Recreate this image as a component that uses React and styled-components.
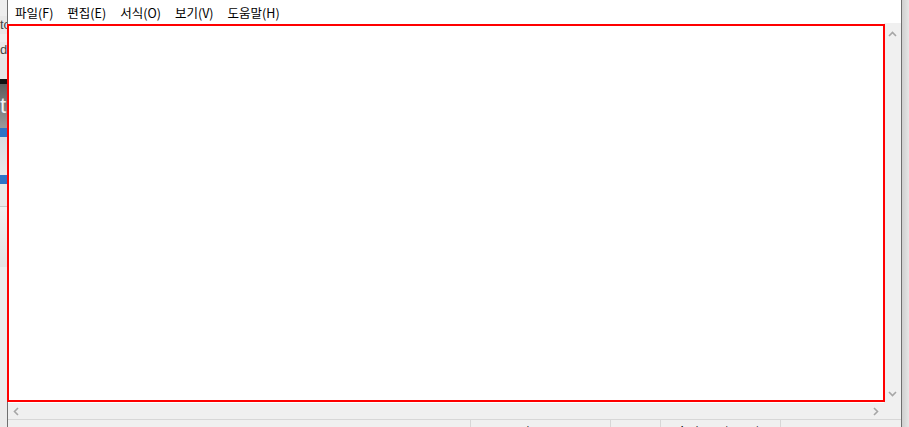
import React from 'react';
import styled, { createGlobalStyle } from 'styled-components';

const GlobalStyle = createGlobalStyle`
  html, body {
    margin: 0;
    padding: 0;
    overflow: hidden;
    background: #e9e9e9;
  }
  body {
    font-family: "Noto Sans CJK KR", "Noto Sans", sans-serif;
  }
`

const Screen = styled.div`
  display: flex;
  width: 909px;
  height: 427px;
  overflow: hidden;
`

// sliver of the window behind notepad
const Behind = styled.div`
  width: 7px;
  flex: none;
  display: flex;
  flex-direction: column;
  overflow: hidden;
  background: #ececec;
`

const Band = styled.div`
  height: ${p => p.h}px;
  flex: none;
  background: ${p => p.bg};
  color: ${p => p.fg || '#555'};
  font-family: "Liberation Sans", sans-serif;
  font-size: ${p => p.size || 13}px;
  line-height: ${p => p.h}px;
  white-space: nowrap;
  overflow: hidden;
`

const Window = styled.div`
  width: 893px;
  flex: none;
  display: flex;
  flex-direction: column;
  background: #f0f0f0;
  border-left: 1px solid #6f6f6f;
  border-right: 1px solid #6f6f6f;
`

const Shadow = styled.div`
  flex: 1;
  background: linear-gradient(to right, #cfcfcf, #e6e6e6);
`

const MenuBar = styled.div`
  height: 23px;
  flex: none;
  display: flex;
  align-items: flex-start;
  background: #fff;
`

const MenuItem = styled.div`
  padding: 4px 7px 0;
  font-size: 12.5px;
  line-height: 17px;
  color: #000;
  white-space: nowrap;
`

const Middle = styled.div`
  display: flex;
  height: 380px;
  flex: none;
`

const Editor = styled.div`
  position: relative;
  width: 876px;
  background: #fff;
`

const Highlight = styled.div`
  position: absolute;
  top: 1px;
  left: -1px;
  right: -1px;
  bottom: 1px;
  border: 2px solid #ff0000;
  z-index: 2;
  pointer-events: none;
`

const VScroll = styled.div`
  width: 17px;
  display: flex;
  flex-direction: column;
  justify-content: space-between;
  align-items: center;
  padding: 8px 0 6px;
  box-sizing: border-box;
  background: #f0f0f0;
`

const HRow = styled.div`
  display: flex;
  height: 16px;
  flex: none;
`

const HScroll = styled.div`
  width: 876px;
  display: flex;
  justify-content: space-between;
  align-items: center;
  padding: 0 5px 0 5px;
  box-sizing: border-box;
`

const Corner = styled.div`
  width: 17px;
`

const StatusBar = styled.div`
  flex: 1;
  display: flex;
  border-top: 1px solid #d7d7d7;
`

const Cell = styled.div`
  width: ${p => p.w}px;
  flex: none;
  box-sizing: border-box;
  border-right: ${p => (p.last ? 'none' : '1px solid #d7d7d7')};
  padding: 2px 0 0 ${p => p.pad || 10}px;
  font-size: 12px;
  line-height: 17px;
  color: #000;
  white-space: nowrap;
`

const Chevron = ({ dir }) => {
  const pts = {
    up: '1,5 4.5,1.5 8,5',
    down: '1,1 4.5,4.5 8,1',
    left: '5,1 1.5,4.5 5,8',
    right: '1,1 4.5,4.5 1,8',
  }[dir]
  const horiz = dir === 'up' || dir === 'down'
  return (
    <svg width={horiz ? 9 : 6} height={horiz ? 6 : 9} viewBox={horiz ? '0 0 9 6' : '0 0 6 9'}>
      <polyline points={pts} fill="none" stroke="#a6a6a6" strokeWidth="1.6" />
    </svg>
  )
}

const menus = ['파일(F)', '편집(E)', '서식(O)', '보기(V)', '도움말(H)']

export default function App() {
  return (
    <Screen>
      <GlobalStyle />
      <Behind>
        <Band h={16} bg="#eeeeee" />
        <Band h={18} bg="#e8e8e8" fg="#444">to</Band>
        <Band h={8} bg="#eeeeee" />
        <Band h={16} bg="#e8e8e8" fg="#444">d</Band>
        <Band h={21} bg="#e6e6e6" />
        <Band h={5} bg="#111" />
        <Band h={44} bg="linear-gradient(#5d5d5d, #9a9a9a)" fg="#f2f2f2" size={22}>t</Band>
        <Band h={9} bg="#2f74c6" />
        <Band h={38} bg="linear-gradient(#d7dde3, #e9e9e9)" />
        <Band h={9} bg="#2f74c6" />
        <Band h={22} bg="#e9e9e9" />
        <Band h={1} bg="#c9c9c9" />
        <Band h={60} bg="linear-gradient(#f0f0f0, #e2e2e2)" />
        <Band h={160} bg="#ebebeb" />
      </Behind>
      <Window>
        <MenuBar>
          {menus.map(m => (
            <MenuItem key={m}>{m}</MenuItem>
          ))}
        </MenuBar>
        <Middle>
          <Editor>
            <Highlight />
          </Editor>
          <VScroll>
            <Chevron dir="up" />
            <Chevron dir="down" />
          </VScroll>
        </Middle>
        <HRow>
          <HScroll>
            <Chevron dir="left" />
            <Chevron dir="right" />
          </HScroll>
          <Corner />
        </HRow>
        <StatusBar>
          <Cell w={463} />
          <Cell w={140} pad={11}>Ln 1, Col 1</Cell>
          <Cell w={50}>100%</Cell>
          <Cell w={120} pad={9}>Windows (CRLF)</Cell>
          <Cell w={120} pad={7} last>UTF-8</Cell>
        </StatusBar>
      </Window>
      <Shadow />
    </Screen>
  )
}
